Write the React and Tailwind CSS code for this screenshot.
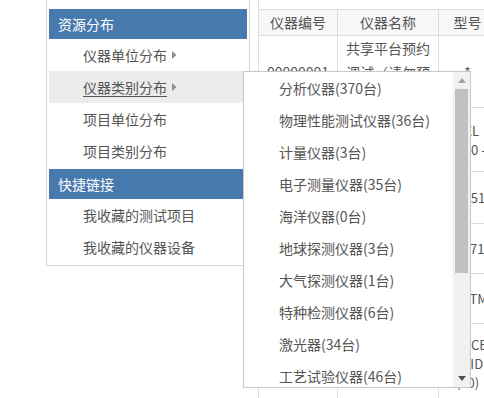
import React from 'react'

const font = { fontFamily: '"Noto Sans CJK SC", "Noto Sans", sans-serif' }

const groups = [
  {
    title: '资源分布',
    items: [
      { label: '仪器单位分布', arrow: true },
      { label: '仪器类别分布', arrow: true, hover: true },
      { label: '项目单位分布' },
      { label: '项目类别分布' },
    ],
  },
  {
    title: '快捷链接',
    items: [{ label: '我收藏的测试项目' }, { label: '我收藏的仪器设备' }],
  },
]

const categories = [
  '分析仪器(370台)',
  '物理性能测试仪器(36台)',
  '计量仪器(3台)',
  '电子测量仪器(35台)',
  '海洋仪器(0台)',
  '地球探测仪器(3台)',
  '大气探测仪器(1台)',
  '特种检测仪器(6台)',
  '激光器(34台)',
  '工艺试验仪器(46台)',
]

const rows = [
  { h: 'h-[72px]', no: '00000001', name: '共享平台预约调试（请勿预约）', model: ['*'] },
  { h: 'h-[64px]', no: '', name: '', model: ['DXL', 'V300 -'] },
  { h: 'h-[52px]', no: '', name: '', model: ['QX-51'] },
  { h: 'h-[50px]', no: '', name: '', model: ['AX-71'] },
  { h: 'h-[50px]', no: '', name: '', model: ['AFSTM'] },
  { h: 'h-[80px]', no: '', name: '', model: ['XRFCE', 'AMID', '(30)'] },
]

function Caret() {
  return (
    <svg width="5" height="8" viewBox="0 0 5 8" className="ml-[5px]">
      <path d="M0 0 L4.5 4 L0 8 Z" fill="#8c8c8c" />
    </svg>
  )
}

function Sidebar() {
  return (
    <div className="w-[204px] shrink-0 self-start border-l border-r border-b border-[#d4d4d4] pt-[9px] pb-[2px] px-[2px] flex flex-col gap-[2px]">
      {groups.map((g) => (
        <div key={g.title}>
          <div className="h-[30px] bg-[#4879ad] text-white text-[14px] leading-[30px] pl-[9px]">{g.title}</div>
          {g.items.map((it) => (
            <div
              key={it.label}
              className={`h-[32px] flex items-center pl-[34px] text-[14px] text-[#555] ${it.hover ? 'bg-[#ececec]' : ''}`}
            >
              <span className={it.hover ? 'underline underline-offset-[3px]' : ''}>{it.label}</span>
              {it.arrow && <Caret />}
            </div>
          ))}
        </div>
      ))}
    </div>
  )
}

function Table() {
  return (
    <div className="ml-[8px] h-full border-l border-[#dcdcdc] pt-[9px] shrink-0">
      <div className="w-[240px] border-t border-[#dcdcdc] text-[14px] text-[#555]">
        <div className="flex h-[26px] bg-[#f7f7f7] border-b border-[#dcdcdc]">
          <div className="w-[79px] border-r border-[#dcdcdc] flex items-center justify-center">仪器编号</div>
          <div className="w-[101px] border-r border-[#dcdcdc] flex items-center justify-center">仪器名称</div>
          <div className="w-[58px] border-r border-[#dcdcdc] flex items-center justify-center">型号</div>
        </div>
        {rows.map((r, i) => (
          <div key={i} className={`flex ${r.h} border-b border-[#dcdcdc]`}>
            <div className="w-[79px] border-r border-[#dcdcdc] flex items-center justify-center">{r.no}</div>
            <div className="w-[101px] border-r border-[#dcdcdc] flex items-center justify-center text-center leading-[24px] px-[6px] overflow-hidden">
              {r.name}
            </div>
            <div className="w-[58px] border-r border-[#dcdcdc] flex flex-col items-center justify-center text-[13px] leading-[19px] whitespace-nowrap">
              {r.model.map((m) => (
                <span key={m}>{m}</span>
              ))}
            </div>
          </div>
        ))}
      </div>
    </div>
  )
}

function Dropdown() {
  return (
    <div className="absolute left-[243px] top-[71px] w-[228px] h-[317px] bg-white border border-[#c8c8c8] flex">
      <div className="flex-1 overflow-hidden">
        {categories.map((c) => (
          <div key={c} className="h-[32px] shrink-0 flex items-center pl-[35px] text-[14px] text-[#555] whitespace-nowrap">
            {c}
          </div>
        ))}
      </div>
      <div className="w-[17px] bg-[#f1f1f1] flex flex-col">
        <div className="h-[17px] flex items-center justify-center">
          <svg width="8" height="5" viewBox="0 0 8 5">
            <path d="M0 5 L4 0 L8 5 Z" fill="#a3a3a3" />
          </svg>
        </div>
        <div className="h-[184px] mx-[2px] bg-[#c1c1c1]" />
        <div className="flex-1" />
        <div className="h-[17px] flex items-center justify-center">
          <svg width="8" height="5" viewBox="0 0 8 5">
            <path d="M0 0 L8 0 L4 5 Z" fill="#505050" />
          </svg>
        </div>
      </div>
    </div>
  )
}

export default function App() {
  return (
    <div className="relative w-[484px] h-[398px] bg-white overflow-hidden" style={font}>
      <div className="flex h-full">
        <div className="w-[46px] shrink-0" />
        <Sidebar />
        <Table />
      </div>
      <Dropdown />
    </div>
  )
}
